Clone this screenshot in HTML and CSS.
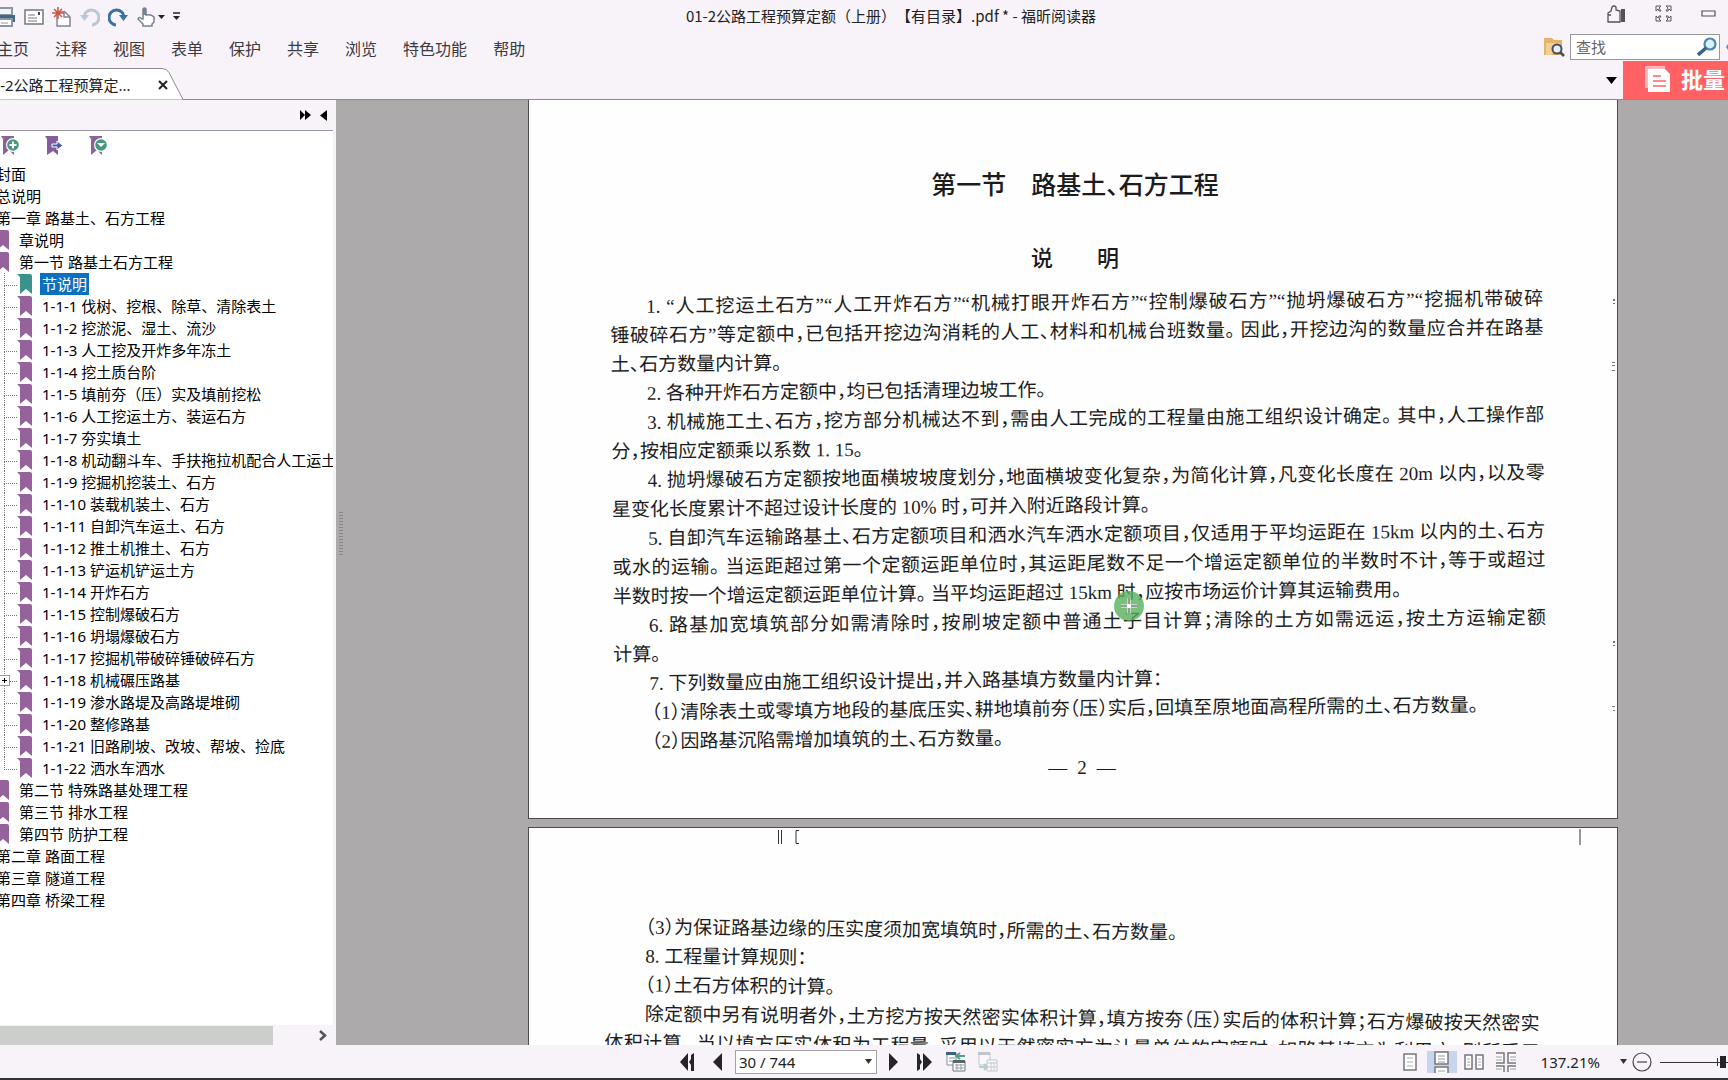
FILE: index.html
```html
<!DOCTYPE html>
<html lang="zh-CN">
<head>
<meta charset="utf-8">
<title>01-2公路工程预算定额（上册）【有目录】.pdf * - 福昕阅读器</title>
<link rel="stylesheet" href="styles.css">
</head>
<body>
<header class="titlebar">
  <div class="quick">
    <button class="ico" aria-label="打印"><svg width="16" height="20" viewBox="4 0 16 20"><path d="M3 1h13v7H3z" fill="#eef4f8" stroke="#8a97a3" stroke-width="2"/><path d="M0 8h19v7H0z" fill="#3f6788"/><path d="M3 12h13v7H3z" fill="#fff" stroke="#8a97a3" stroke-width="2"/><path d="M5 16h7" stroke="#8a97a3"/></svg></button>
    <button class="ico mail" aria-label="邮件"><svg width="20" height="16"><path d="M1 1h18v14H1z" fill="#fff" stroke="#77777c" stroke-width="1.500"/><path d="M4 6h7M4 9h9M4 12h9" stroke="#77777c"/><path d="M14 3h2v3h-2z" fill="#444"/></svg></button>
    <button class="ico new" aria-label="新建"><svg width="19" height="20"><path d="M5 5h8l5 5v9H5z" fill="#fff" stroke="#85858a" stroke-width="1.500"/><path d="M12 4v6h6" fill="none" stroke="#85858a" stroke-width="1.500"/><path d="M6 0v12M0 6h12M2 2l8 8M10 2l-8 8" stroke="#cf5540" stroke-width="1.500"/></svg></button>
    <button class="ico undo" aria-label="撤销"><svg width="20" height="20"><path d="M4 10a7.500 7.500 0 1 1 8 8" fill="none" stroke="#bcc6d6" stroke-width="3"/><path d="M0 8h9l-4.500 6z" fill="#bcc6d6"/></svg></button>
    <button class="ico redo" aria-label="重做"><svg width="20" height="20"><path d="M16 10a7.500 7.500 0 1 0-8 8" fill="none" stroke="#3b719f" stroke-width="3"/><path d="M20 8h-9l4.500 6z" fill="#3b719f"/></svg></button>
    <button class="ico hand" aria-label="手形工具"><svg width="28" height="20"><path d="M6 12V2q1.500-2 3 0v6q5-1 8 2v5l-2 2v2H6v-2l-5-5q1-3 4 0z" fill="#fff" stroke="#7a828c" stroke-width="1.500"/><path d="M6 1h3v7H6z" fill="#718593"/><path d="M21 8h7l-3.500 4z" fill="#222"/></svg></button>
    <button class="ico more" aria-label="自定义"><svg width="7" height="9"><path d="M0 1h7" stroke="#222" stroke-width="1.500"/><path d="M0 4h7L3.500 8z" fill="#222"/></svg></button>
  </div>
  <div class="doc-title">01-2公路工程预算定额（上册）【有目录】.pdf * - 福昕阅读器</div>
  <div class="win">
    <button class="ico" aria-label="点赞"><svg width="19" height="18"><path d="M1 17V8l3-2 1-4q2-2 4 0v3l4 1v11zM1 10h3" fill="none" stroke="#55525c" stroke-width="1.300"/><path d="M14 4h4v13h-4z" fill="#55525c"/></svg></button>
    <button class="ico" aria-label="全屏"><svg width="17" height="17" fill="none" stroke="#55525c"><path d="M1 6V1h5L4 3l2 3H4L3 4zM16 6V1h-5l2 2-2 3h2l1-2zM1 11v5h5l-2-2 2-3H4l-1 2zM16 11v5h-5l2-2-2-3h2l1 2z"/></svg></button>
    <button class="ico" aria-label="最小化"><svg width="15" height="7"><path d="M1 1h13v5H1z" fill="none" stroke="#55525c" stroke-width="1.200"/></svg></button>
  </div>
</header>
<div class="menubar">
  <nav class="menu"><button>主页</button><button>注释</button><button>视图</button><button>表单</button><button>保护</button><button>共享</button><button>浏览</button><button>特色功能</button><button>帮助</button></nav>
  <div class="find">
    <button class="ico" aria-label="搜索文件夹"><svg width="21" height="20"><path d="M0 1h8l2 2h8v15H0z" fill="#e3b469"/><path d="M2 6h14v3l-9 9H2z" fill="#f0cf95"/><circle cx="13" cy="12" r="4.500" fill="#e4eef5" stroke="#4b4e57" stroke-width="2"/><path d="M16 15l4 4" stroke="#4b4e57" stroke-width="2.500"/></svg></button>
    <label class="searchbox"><input type="text" placeholder="查找" aria-label="查找"><svg width="20" height="20"><circle cx="13" cy="7" r="5.500" fill="#d8f0f8" stroke="#4a86a8" stroke-width="2.200"/><path d="M9 11l-8 7" stroke="#326286" stroke-width="3.500"/></svg></label>
    <svg class="next-hit" width="2" height="6"><path d="M2 0v6L0 3z" fill="#668cab"/></svg>
  </div>
</div>
<div class="tabrow">
  <div class="tab">
    <svg class="tab-shape" width="186" height="32"><path d="M0 .5h162q5 0 7 4l14 27H0z" fill="#fff"/><path d="M0 .5h162q5 0 7 4l14 27" fill="none" stroke="#8c8a8e"/></svg>
    <span class="tab-name">01-2公路工程预算定...</span>
    <button class="ico tab-close" aria-label="关闭"><svg width="10" height="10"><path d="M1 1l8 8M9 1l-8 8" stroke="#222" stroke-width="2"/></svg></button>
  </div>
  <div class="tab-right">
    <button class="ico" aria-label="标签列表"><svg width="11" height="7"><path d="M0 0h11L5.500 7z"/></svg></button>
    <button class="banner"><svg width="25" height="26"><path d="M0 0h20v22H0z" fill="#fff" opacity=".55"/><path d="M3 3h17l5 5v18H3z" fill="#fff"/><path d="M8 10h8M8 15h13M8 20h13" stroke="#ff6165" stroke-width="1.500"/></svg><span>批量</span></button>
  </div>
</div>
<main class="work">
  <aside class="side">
    <div class="side-head">
      <button class="ico" aria-label="展开"><svg width="11" height="10"><path d="M0 0l5 5-5 5zM5 0l6 5-6 5z"/></svg></button>
      <button class="ico" aria-label="折叠"><svg width="7" height="11"><path d="M7 0v11L0 5.500z"/></svg></button>
    </div>
    <div class="side-tools">
      <button class="ico" aria-label="添加书签"><svg width="18" height="20"><path d="M0 0h13v19l-5-5-6 5V3z" fill="#8a6399"/><circle cx="12" cy="9" r="7" fill="#fff"/><circle cx="12" cy="9" r="5.800" fill="#48987f"/><path d="M8.500 9h7M12 5.500v7" stroke="#fff" stroke-width="2"/></svg></button>
      <button class="ico" aria-label="定位书签"><svg width="18" height="20"><path d="M0 0h13v19l-5-4-6 4V3z" fill="#835d9c"/><path d="M7 8h5V5l6 4.500-6 4.500v-3H7z" fill="#4b61a6" stroke="#fff"/></svg></button>
      <button class="ico" aria-label="书签菜单"><svg width="18" height="20"><path d="M0 0h13v19l-5-5-6 5V3z" fill="#8a6399"/><circle cx="12" cy="9" r="7" fill="#fff"/><circle cx="12" cy="9" r="5.800" fill="#48987f"/><path d="M8 7h8l-4 4z" fill="#fff"/></svg></button>
    </div>
    <svg class="defs" width="0" height="0"><symbol id="bm" viewBox="0 0 15 20"><path d="M0 0h13q2 0 2 2v18l-6-5-6 5V3z"/></symbol></svg>
    <ul class="tree">
      <li class="l1">封面</li>
      <li class="l1">总说明</li>
      <li class="l1">第一章 路基土、石方工程</li>
      <li class="l2"><svg><use href="#bm"/></svg>章说明</li>
      <li class="l2"><svg><use href="#bm"/></svg>第一节 路基土石方工程</li>
      <li class="l3 on"><svg><use href="#bm"/></svg><span>节说明</span></li>
      <li class="l3"><svg><use href="#bm"/></svg>1-1-1 伐树、挖根、除草、清除表土</li>
      <li class="l3"><svg><use href="#bm"/></svg>1-1-2 挖淤泥、湿土、流沙</li>
      <li class="l3"><svg><use href="#bm"/></svg>1-1-3 人工挖及开炸多年冻土</li>
      <li class="l3"><svg><use href="#bm"/></svg>1-1-4 挖土质台阶</li>
      <li class="l3"><svg><use href="#bm"/></svg>1-1-5 填前夯（压）实及填前挖松</li>
      <li class="l3"><svg><use href="#bm"/></svg>1-1-6 人工挖运土方、装运石方</li>
      <li class="l3"><svg><use href="#bm"/></svg>1-1-7 夯实填土</li>
      <li class="l3"><svg><use href="#bm"/></svg>1-1-8 机动翻斗车、手扶拖拉机配合人工运土</li>
      <li class="l3"><svg><use href="#bm"/></svg>1-1-9 挖掘机挖装土、石方</li>
      <li class="l3"><svg><use href="#bm"/></svg>1-1-10 装载机装土、石方</li>
      <li class="l3"><svg><use href="#bm"/></svg>1-1-11 自卸汽车运土、石方</li>
      <li class="l3"><svg><use href="#bm"/></svg>1-1-12 推土机推土、石方</li>
      <li class="l3"><svg><use href="#bm"/></svg>1-1-13 铲运机铲运土方</li>
      <li class="l3"><svg><use href="#bm"/></svg>1-1-14 开炸石方</li>
      <li class="l3"><svg><use href="#bm"/></svg>1-1-15 控制爆破石方</li>
      <li class="l3"><svg><use href="#bm"/></svg>1-1-16 坍塌爆破石方</li>
      <li class="l3"><svg><use href="#bm"/></svg>1-1-17 挖掘机带破碎锤破碎石方</li>
      <li class="l3"><button class="plus" aria-label="展开"></button><svg><use href="#bm"/></svg>1-1-18 机械碾压路基</li>
      <li class="l3"><svg><use href="#bm"/></svg>1-1-19 渗水路堤及高路堤堆砌</li>
      <li class="l3"><svg><use href="#bm"/></svg>1-1-20 整修路基</li>
      <li class="l3"><svg><use href="#bm"/></svg>1-1-21 旧路刷坡、改坡、帮坡、捡底</li>
      <li class="l3 last"><svg><use href="#bm"/></svg>1-1-22 洒水车洒水</li>
      <li class="l2"><svg><use href="#bm"/></svg>第二节 特殊路基处理工程</li>
      <li class="l2"><svg><use href="#bm"/></svg>第三节 排水工程</li>
      <li class="l2"><svg><use href="#bm"/></svg>第四节 防护工程</li>
      <li class="l1">第二章 路面工程</li>
      <li class="l1">第三章 隧道工程</li>
      <li class="l1">第四章 桥梁工程</li>
    </ul>
    <div class="hscroll"><div class="thumb"></div><svg width="8" height="11"><path d="M1 1l5 4.500L1 10" fill="none" stroke="#55525a" stroke-width="2.500"/></svg></div>
  </aside>
  <section class="canvas">
    <div class="grip"></div>
    <article class="page first">
      <h1>第一节　路基土<i>、</i>石方工程</h1>
      <h2>说　　明</h2>
      <div class="scan ccw">
        <p class="full in">1. “人工挖运土石方”“人工开炸石方”“机械打眼开炸石方”“控制爆破石方”“抛坍爆破石方”“挖掘机带破碎</p>
        <p class="full">锤破碎石方”等定额中，已包括开挖边沟消耗的人工、材料和机械台班数量。 因此，开挖边沟的数量应合并在路基</p>
        <p>土、石方数量内计算。</p>
        <p class="in">2. 各种开炸石方定额中，均已包括清理边坡工作。</p>
        <p class="full in">3. 机械施工土、石方，挖方部分机械达不到，需由人工完成的工程量由施工组织设计确定。 其中，人工操作部</p>
        <p>分，按相应定额乘以系数 1. 15。</p>
        <p class="full in">4. 抛坍爆破石方定额按地面横坡坡度划分，地面横坡变化复杂，为简化计算，凡变化长度在 20m 以内，以及零</p>
        <p>星变化长度累计不超过设计长度的 10% 时，可并入附近路段计算。</p>
        <p class="full in">5. 自卸汽车运输路基土、石方定额项目和洒水汽车洒水定额项目，仅适用于平均运距在 15km 以内的土、石方</p>
        <p class="full">或水的运输。 当运距超过第一个定额运距单位时，其运距尾数不足一个增运定额单位的半数时不计，等于或超过</p>
        <p>半数时按一个增运定额运距单位计算。 当平均运距超过 15km 时，应按市场运价计算其运输费用。</p>
        <p class="full in">6. 路基加宽填筑部分如需清除时，按刷坡定额中普通土子目计算；清除的土方如需远运，按土方运输定额</p>
        <p>计算。</p>
        <p class="in">7. 下列数量应由施工组织设计提出，并入路基填方数量内计算：</p>
        <p class="in item">（1）清除表土或零填方地段的基底压实、耕地填前夯（压）实后，回填至原地面高程所需的土、石方数量。</p>
        <p class="in item">（2）因路基沉陷需增加填筑的土、石方数量。</p>
      </div>
      <div class="folio"><span>—</span><span>2</span><span>—</span></div>
      <svg class="specks" width="4" height="460" fill="#777"><path d="M1 0h2v2H1zM1 4h2v1H1zM0 63h3v1H0zM0 66h3v1H0zM0 71h3v1H0zM1 342h2v2H1zM1 346h2v1H1zM0 407h3v1H0zM1 411h2v1H1z"/></svg>
      <svg class="pointer" width="30" height="30"><circle cx="15" cy="15" r="15" fill="#58b05c" opacity=".8"/><path d="M15 7v16M7 15h16" stroke="#fff" stroke-width="3"/><path d="M15 7v6M15 17v6M7 15h6M17 15h6" stroke="#333"/></svg>
    </article>
    <article class="page second">
      <svg class="crop-marks" width="22" height="16" fill="none" stroke="#333"><path d="M1.500 1v14M4.500 1v14M22 1.500h-3v13h3"/></svg>
      <svg class="crop-mark-right" width="2" height="16"><path d="M1 0v16" stroke="#333"/></svg>
      <div class="scan cw">
        <p class="in">（3）为保证路基边缘的压实度须加宽填筑时，所需的土、石方数量。</p>
        <p class="in">8. 工程量计算规则：</p>
        <p class="in">（1）土石方体积的计算。</p>
        <p class="full in">除定额中另有说明者外，土方挖方按天然密实体积计算，填方按夯（压）实后的体积计算；石方爆破按天然密实</p>
        <p class="full">体积计算。 当以填方压实体积为工程量，采用以天然密实方为计量单位的定额时，如路基填方为利用方，则所采用</p>
      </div>
    </article>
  </section>
</main>
<footer class="status">
  <div class="pager">
    <button class="ico" aria-label="首页"><svg width="16" height="18" fill="#26242a"><path d="M8 0v18L0 9zM14 0v18h-3V12L9 9l2-3V2z"/></svg></button>
    <button class="ico" aria-label="上一页"><svg width="9" height="18" fill="#26242a"><path d="M9 0v18L0 9z"/></svg></button>
    <label class="combo"><input type="text" value="30 / 744" aria-label="页码"><svg width="7" height="5"><path d="M0 0h7L3.500 5z" fill="#333"/></svg></label>
    <button class="ico" aria-label="下一页"><svg width="9" height="18" fill="#26242a"><path d="M0 0v18l9-9z"/></svg></button>
    <button class="ico last-page" aria-label="末页"><svg width="15" height="18" fill="#26242a"><path d="M0 0l3 2v4l2 3-2 3v4l-3 2zM6 0v18l9-9z"/></svg></button>
    <button class="ico" aria-label="后退视图"><svg width="20" height="20"><path d="M1 1h9v12H1z" fill="#fff" stroke="#84919c"/><path d="M0 0h10v3H0z" fill="#3c6181"/><path d="M3 6h6M3 9h4" stroke="#84919c"/><path d="M11 4h8M14 1l-4 3 4 3" fill="none" stroke="#51a18a" stroke-width="2"/><path d="M7 9h12v10H7z" fill="#fff" stroke="#6d7780"/><path d="M7 8h12v3H7z" fill="#59636d"/><path d="M9 13h9M9 16h9M11 12v6M15 12v6" stroke="#929ba3"/></svg></button>
    <button class="ico" aria-label="前进视图"><svg width="20" height="20" opacity=".45"><path d="M1 1h11v12H1z" fill="#fff" stroke="#84919c"/><path d="M0 0h12v3H0z" fill="#84919c"/><path d="M9 8h10v11H9z" fill="#fff" stroke="#84919c"/><path d="M9 11h10M9 15h10M13 10v9M16 10v9" stroke="#929ba3"/><path d="M1 15h8M6 12l3 3-3 3" fill="none" stroke="#62a590" stroke-width="2"/></svg></button>
  </div>
  <div class="views">
    <button class="ico" aria-label="单页"><svg width="14" height="18"><path d="M1 1h12v16H1z" fill="#fff" stroke="#77757c" stroke-width="1.500"/><path d="M4 5h6M4 9h6M4 13h6" stroke="#aaa"/></svg></button>
    <button class="ico picked" aria-label="连续"><svg width="16" height="22"><path d="M1 1h13v12H1zM1 22v-6h13v6" fill="#fff" stroke="#77757c" stroke-width="1.500"/><path d="M4 5h7M4 8h7M4 11h7M4 20h7" stroke="#999"/></svg></button>
    <button class="ico" aria-label="双页"><svg width="20" height="16"><path d="M1 1h7v14H1zM12 1h7v14h-7z" fill="#fff" stroke="#77757c" stroke-width="1.500"/><path d="M3 5h3M3 8h3M3 11h3M14 5h3M14 8h3M14 11h3" stroke="#aaa"/></svg></button>
    <button class="ico" aria-label="连续双页"><svg width="20" height="20"><path d="M0 1h8v10H0M20 1h-8v10h8M0 14h8v6M20 14h-8v6" fill="#fff" stroke="#77757c" stroke-width="1.500"/><path d="M0 5h6M0 8h6M14 5h6M14 8h6M0 17h6M14 17h6" stroke="#999"/></svg></button>
    <span class="zoom">137.21%</span>
    <button class="ico" aria-label="缩放列表"><svg width="7" height="5"><path d="M0 0h7L3.500 5z" fill="#333"/></svg></button>
    <button class="ico minus" aria-label="缩小"><svg width="20" height="20"><circle cx="10" cy="10" r="9" fill="none" stroke="#444148" stroke-width="1.200"/><path d="M5 10h10" stroke="#444148" stroke-width="1.200"/></svg></button>
    <svg class="slider" width="68" height="14"><path d="M0 7.500h68" stroke="#333"/><path d="M57.500 3v8" stroke="#333"/><path d="M60 1h6v12h-6z" fill="#26242a"/></svg>
  </div>
</footer>
</body>
</html>
```
FILE: styles.css
```css
* { box-sizing: border-box; }
body {
  margin: 0;
  height: 100vh;
  display: flex;
  flex-direction: column;
  overflow: hidden;
  background: #f7f3f9;
  color: #222;
  font-family: "Noto Sans", "Noto Sans CJK SC", sans-serif;
  font-size: 15px;
}
button { border: 0; padding: 0; background: none; font: inherit; color: inherit; }
svg { display: block; flex: none; }
.ico { display: flex; align-items: center; flex: none; }

.titlebar { flex: none; height: 33px; display: grid; grid-template-columns: 1fr auto 1fr; align-items: center; }
.quick { display: flex; align-items: center; }
.mail { margin-left: 8px; }
.new { margin-left: 8px; }
.undo { margin-left: 9px; }
.redo { margin-left: 8px; }
.hand { margin-left: 9px; }
.more { margin-left: 8px; }
.doc-title { padding: 0 0 2px 54px; font-family: "Noto Sans CJK SC", sans-serif; line-height: 24px; text-spacing-trim: space-all; white-space: nowrap; }
.win { display: flex; align-items: center; justify-content: flex-end; gap: 29px; padding: 0 12px 6px 0; }

.menubar { flex: none; height: 28px; display: flex; justify-content: space-between; align-items: center; }
.menu { display: flex; gap: 26px; margin-left: -3px; padding-top: 3px; font-size: 16px; line-height: 24px; color: #3c3942; }
.menu button { white-space: nowrap; }
.find { display: flex; align-items: center; padding-bottom: 1px; }
.searchbox { display: flex; align-items: center; width: 150px; height: 26px; margin: 0 6px 0 5px; padding-right: 2px; border: 1px solid #99979c; background: #fff; }
.searchbox input { flex: 1; min-width: 0; border: 0; outline: 0; padding: 0 0 0 5px; background: none; font: inherit; }
.searchbox input::placeholder { color: #66636a; opacity: 1; }

.tabrow { flex: none; height: 39px; display: flex; justify-content: space-between; align-items: flex-end; border-bottom: 1px solid #8c8a8e; }
.tab { position: relative; width: 186px; height: 31px; display: flex; align-items: center; justify-content: space-between; padding: 2px 18px 0 0; }
.tab-shape { position: absolute; left: 0; top: 0; }
.tab-name { position: relative; margin-left: -17px; white-space: nowrap; }
.tab-close { position: relative; }
.tab-right { display: flex; align-items: center; gap: 6px; height: 38px; }
.banner { width: 105px; height: 38px; display: flex; align-items: center; gap: 11px; padding: 0 0 3px 22px; overflow: hidden; background: #ff6165; color: #fff; font-size: 22px; line-height: 32px; font-weight: 700; white-space: nowrap; }

.work { flex: 1; min-height: 0; display: flex; }
.side { flex: none; width: 336px; display: flex; flex-direction: column; border-right: 3px solid #f7f3f9; background: #fff; }
.side-head { flex: none; height: 31px; display: flex; align-items: center; justify-content: flex-end; gap: 9px; padding-right: 6px; border-bottom: 1px solid #99979c; background: #f7f3f9; }
.side-tools { flex: none; display: flex; gap: 26px; height: 32px; padding: 5px 0 0 1px; align-items: flex-start; }
.defs { position: absolute; }
.tree { flex: 1; min-height: 0; margin: 0; padding: 0; overflow: hidden; list-style: none; color: #000; }
.tree li { position: relative; display: flex; align-items: center; height: 22px; line-height: 22px; white-space: nowrap; }
.tree li svg { width: 15px; height: 20px; margin-right: 10px; fill: #96629c; }
.tree .l1 { margin-left: -4px; }
.tree .l2 { margin-left: -6px; }
.tree .l3 { padding-left: 17px; }
.tree .l3::before { content: ""; position: absolute; left: 4px; top: 0; width: 12px; height: 12px; border-left: 1px dotted #777; border-bottom: 1px dotted #777; }
.tree .l3::after { content: ""; position: absolute; left: 4px; top: 12px; height: 10px; border-left: 1px dotted #777; }
.tree .last::after { content: none; }
.tree .on svg { fill: #3a938b; margin-right: 8px; }
.tree .on span { padding: 0 2px; background: #0b70c0; color: #fff; }
.plus { position: absolute; z-index: 1; left: -1px; top: 6px; width: 11px; height: 11px; border: 1px solid #999; background: linear-gradient(#000, #000) center / 5px 1px no-repeat, linear-gradient(#000, #000) center / 1px 5px no-repeat, #fff; }
.hscroll { flex: none; height: 20px; display: flex; align-items: center; justify-content: space-between; padding-right: 6px; background: #f7f3f9; }
.thumb { width: 273px; height: 19px; background: #cccecc; }

.canvas { position: relative; flex: 1; min-width: 0; display: flex; flex-direction: column; gap: 8px; padding: 0 110px 0 192px; overflow: hidden; background: #acaaab; }
.grip { position: absolute; left: 3px; top: 412px; width: 4px; height: 44px; background: repeating-linear-gradient(#88868a 0 1px, transparent 1px 3px); }
.page { position: relative; flex: none; border: 1px solid #4d4b4e; background: #fefefe; color: #1c1c1c; font-family: "Liberation Serif", "Noto Sans CJK SC", sans-serif; font-size: 19px; }
.first { height: 719px; border-top: 0; }
.second { height: 719px; padding-top: 89px; }
h1, h2 { margin: 0; padding-left: 4px; text-align: center; font-weight: 500; }
h1 { padding-top: 70px; font-size: 25px; line-height: 32px; }
h1 i { font-style: normal; font-feature-settings: "halt"; }
h2 { padding-top: 41px; font-size: 22px; line-height: 32px; }
.scan { font-feature-settings: "halt"; line-height: 29px; }
.scan p { margin: 0; white-space: nowrap; }
.scan .in { padding-left: 36px; }
.scan .item { padding-left: 38px; }
.scan .full { text-align-last: justify; }
.ccw { margin: 13px 72px 0 83px; transform: rotate(-0.5deg); }
.cw { margin: 0 77px 0 76px; transform: rotate(0.6deg); }
.cw .in { padding-left: 40px; }
.folio { display: flex; justify-content: center; gap: 10px; padding-left: 18px; line-height: 32px; }
.specks { position: absolute; right: 1px; top: 199px; }
.pointer { position: absolute; left: 585px; top: 491px; }
.crop-marks { position: absolute; left: 248px; top: 1px; }
.crop-mark-right { position: absolute; right: 36px; top: 1px; }

.status { flex: none; height: 35px; display: flex; align-items: center; justify-content: space-between; padding-left: 680px; border-bottom: 2px solid #333136; }
.pager { display: flex; align-items: center; gap: 12px; }
.pager .ico:first-child { margin-right: 5px; }
.pager .last-page { margin: 0 2px 0 7px; }
.combo { display: flex; align-items: center; width: 142px; height: 24px; margin-left: 1px; padding-right: 4px; border: 1px solid #a3a1a6; background: #fff; }
.combo input { flex: 1; min-width: 0; border: 0; outline: 0; padding: 0 0 0 3px; background: none; font: inherit; color: #222; }
.views { display: flex; align-items: center; }
.picked { width: 30px; height: 22px; justify-content: center; margin: 0 7px 0 10px; background: #c8d5ef; }
.views .picked + .ico { margin-right: 12px; }
.zoom { margin: 0 20px 0 25px; }
.minus { margin: 0 8px 0 5px; }
```
